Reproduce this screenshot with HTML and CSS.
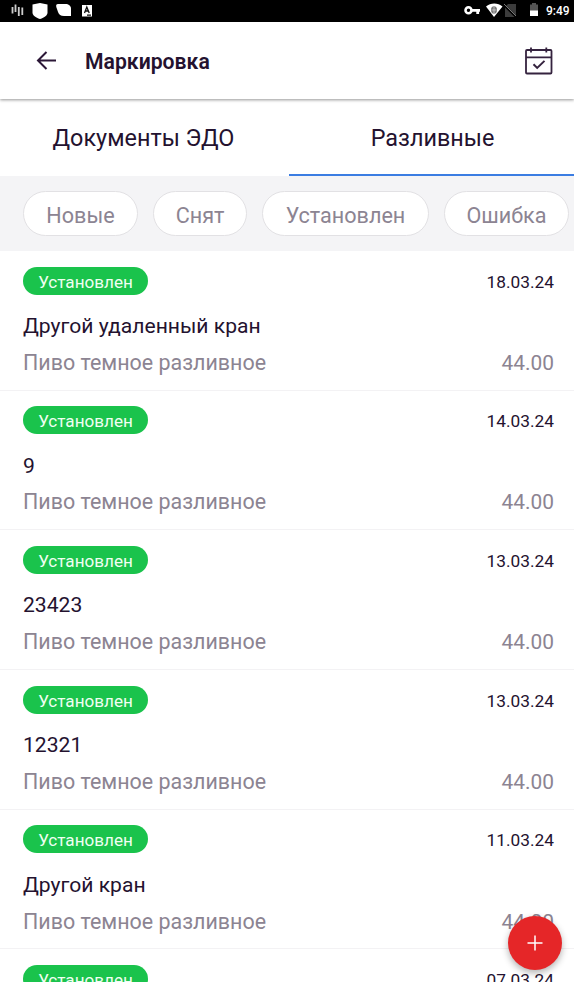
FILE: index.html
```html
<!DOCTYPE html>
<html lang="ru">
<head>
<meta charset="utf-8">
<title>Маркировка</title>
<link rel="stylesheet" href="styles.css">
</head>
<body>
<div class="screen">
  <div class="status">
    <svg class="status-icons" width="100" height="22" viewBox="0 0 100 22">
      <path d="M12.500 7v6.500M15.500 4.500v7.500M18.800 7v9M22.300 7.500v7.500" stroke="#ccc" stroke-width="1.800"/>
      <path d="M32.500 4.500 40 3l7.500 1.500v8c0 3-3 5-7.500 6.500-4.500-1.500-7.500-3.500-7.500-6.500z" fill="#fff"/>
      <path d="M58 4h7.500c3 0 5.500 2 5.500 4.500V16h-7c-3.500 0-5-1.500-6-4l-1.700-5C55.800 5 56.500 4 58 4z" fill="#fff"/>
      <rect x="82" y="5" width="10" height="11.500" fill="#fff"/>
      <path d="m84.500 13 2.300-6 2.400 6M85.300 11h3M87 15.200h4" fill="none" stroke="#111" stroke-width="1.300"/>
    </svg>
    <svg class="status-icons" width="82" height="22" viewBox="0 0 82 22">
      <circle cx="5.500" cy="10.300" r="3" fill="none" stroke="#fff" stroke-width="2.600"/>
      <path d="M8 10.300h9M14.700 10v4" fill="none" stroke="#fff" stroke-width="2.800"/>
      <path d="M23 6.500c4.500-4 12-4 16.500 0L31 17z" fill="#fff"/>
      <ellipse cx="31" cy="10" rx="3" ry="3.700" fill="#777"/>
      <path d="M28.500 10h5M31 6.500v7" stroke="#ddd" stroke-width=".7"/>
      <path d="M45 4h8v13H42V7z" fill="#3c3c3c"/>
      <path d="m41 5 12 12" stroke="#000" stroke-width="2"/><path d="m41 4 12 12" stroke="#777" stroke-width="1"/>
      <path d="M69 3h4v1.500h2V11h-8V4.500h2z" fill="#555"/><path d="M67 10.500h8V16h-8z" fill="#fff"/>
    </svg>
    <span class="clock">9:49</span>
  </div>
  <header class="bar">
    <svg width="20" height="20" viewBox="0 0 20 20" fill="none" stroke="#2b1737" stroke-width="2"><path d="M20 9.500H2.500M10.500 1 2 9.500 10.500 18"/></svg>
    <h1 class="title">Маркировка</h1>
    <svg class="calendar" width="28" height="28" viewBox="0 0 28 28" fill="none" stroke="#35233f" stroke-width="1.800"><rect x="1" y="3" width="25.500" height="23.500" rx="1"/><path d="M1 10.300h25.500M6 .5v5M21.300 .5v5"/><path d="m8.500 17.200 3.700 3.700 7.300-7" stroke-width="2"/></svg>
  </header>
  <nav class="tabs">
    <div class="tab">Документы ЭДО</div>
    <div class="tab tab-active">Разливные</div>
  </nav>
  <div class="chips">
    <span class="chip chip-new">Новые</span>
    <span class="chip chip-off">Снят</span>
    <span class="chip chip-on">Установлен</span>
    <span class="chip chip-error">Ошибка</span>
  </div>
  <main class="list">
    <article class="item"><div class="row"><span class="badge">Установлен</span><time class="date">18.03.24</time></div><h2 class="name">Другой удаленный кран</h2><div class="row product"><span>Пиво темное разливное</span><span class="amount">44.00</span></div></article>
    <article class="item"><div class="row"><span class="badge">Установлен</span><time class="date">14.03.24</time></div><h2 class="name">9</h2><div class="row product"><span>Пиво темное разливное</span><span class="amount">44.00</span></div></article>
    <article class="item"><div class="row"><span class="badge">Установлен</span><time class="date">13.03.24</time></div><h2 class="name">23423</h2><div class="row product"><span>Пиво темное разливное</span><span class="amount">44.00</span></div></article>
    <article class="item"><div class="row"><span class="badge">Установлен</span><time class="date">13.03.24</time></div><h2 class="name">12321</h2><div class="row product"><span>Пиво темное разливное</span><span class="amount">44.00</span></div></article>
    <article class="item"><div class="row"><span class="badge">Установлен</span><time class="date">11.03.24</time></div><h2 class="name">Другой кран</h2><div class="row product"><span>Пиво темное разливное</span><span class="amount">44.00</span></div></article>
    <article class="item"><div class="row"><span class="badge">Установлен</span><time class="date">07.03.24</time></div></article>
  </main>
  <button class="fab" aria-label="Добавить"><svg width="16" height="16" viewBox="0 0 16 16" stroke="#fff" stroke-width="1.500"><path d="M8 .5v15M.5 8h15"/></svg></button>
</div>
</body>
</html>
```
FILE: styles.css
```css
* { box-sizing: border-box; }
body { margin: 0; background: #fff; }
.screen {
  position: relative;
  width: 574px;
  height: 982px;
  overflow: hidden;
  display: flex;
  flex-direction: column;
  font-family: Roboto, sans-serif;
  color: #24122f;
}
svg { display: block; flex: none; }
.status {
  height: 22px;
  flex: none;
  display: flex;
  align-items: center;
  background: #000;
  color: #fff;
}
.status-icons + .status-icons { margin-left: auto; }
.clock { width: 28px; margin-left: 1px; font-size: 12px; font-weight: 500; line-height: 22px; white-space: nowrap; }
.bar {
  height: 77px;
  flex: none;
  display: flex;
  align-items: center;
  padding: 0 21px 0 36px;
  box-shadow: 0 1px 3px rgba(0, 0, 0, .42);
  z-index: 1;
}
.title { margin: 2px 0 0 29px; font-size: 21.2px; line-height: 30px; font-weight: 600; }
.calendar { margin-left: auto; }
.tabs { height: 77px; flex: none; display: grid; grid-template-columns: 287px 285px; column-gap: 2px; }
.tab {
  text-align: center;
  font-size: 23.4px;
  line-height: 78px;
  height: 77px;
}
.tab-active { border-bottom: 2px solid #3b7de2; padding-left: 2px; }
.chips {
  height: 75px;
  flex: none;
  display: flex;
  gap: 15px;
  padding: 15px 0 0 23px;
  background: #f4f4f6;
}
.chip {
  flex: none;
  height: 45px;
  border: 1px solid #e2e1e4;
  border-radius: 23px;
  background: #fff;
  color: #8c8492;
  font-size: 21.6px;
  line-height: 47px;
  text-align: center;
  white-space: nowrap;
}
.chip-new { width: 115px; }
.chip-off { width: 94px; }
.chip-on { width: 167px; }
.chip-error { width: 125px; }
.item {
  height: 139.7px;
  padding: 15.5px 20px 0 23px;
  border-bottom: 1px solid #f3f2f4;
}
.row { display: flex; justify-content: space-between; }
.badge {
  width: 125px;
  height: 28px;
  border-radius: 14px;
  background: #1ac34c;
  color: #effff2;
  font-size: 17.1px;
  line-height: 30px;
  text-align: center;
}
.date { font-size: 17.3px; line-height: 30px; }
.name { margin: 13.500px 0 0; height: 32px; font-size: 21.1px; line-height: 32px; font-weight: 400; }
.product { margin-top: 4.800px; font-size: 21.45px; line-height: 32px; color: #8c8492; }
.amount { font-size: 20.9px; }
.fab {
  position: absolute;
  left: 508px;
  top: 916px;
  width: 54px;
  height: 54px;
  border: 0;
  padding: 0;
  border-radius: 50%;
  background: #e52628;
  display: grid;
  place-items: center;
  box-shadow: 0 3px 7px rgba(0, 0, 0, .3);
}
```
